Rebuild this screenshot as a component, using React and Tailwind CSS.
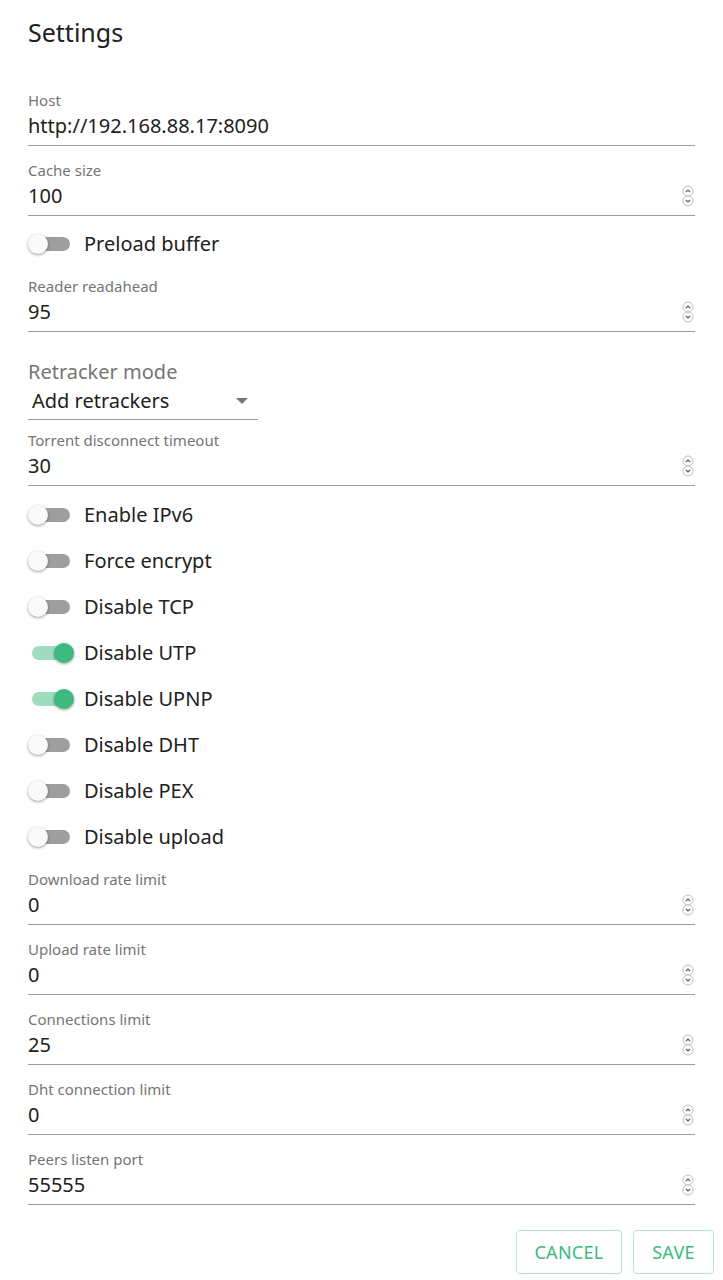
import React from "react";

const font = { fontFamily: '"Noto Sans", "Open Sans", sans-serif' };

function Spinner() {
    return (
        <svg width="12" height="22" viewBox="0 0 12 22" className="shrink-0">
            <circle cx="6" cy="6" r="5" fill="white" stroke="#bdbdbd" strokeWidth="1" />
            <path d="M3.8 7.2 L6 5 L8.2 7.2" fill="none" stroke="#555" strokeWidth="1.2" />
            <circle cx="6" cy="16" r="5" fill="white" stroke="#bdbdbd" strokeWidth="1" />
            <path d="M3.8 14.8 L6 17 L8.2 14.8" fill="none" stroke="#555" strokeWidth="1.2" />
        </svg>
    );
}

function TextField({ label, value, number }) {
    return (
        <div className="mr-[28px] pt-[2px]">
            <div className="text-[15px] leading-[20px] text-[#757575]">{label}</div>
            <div className="flex items-center justify-between h-[36px] pb-[4px] border-b border-[#9e9e9e]">
                <span className="text-[20px] text-[#212121] leading-[26px]">{value}</span>
                {number && <div className="mr-[1px]"><Spinner /></div>}
            </div>
        </div>
    );
}

function Toggle({ label, on }) {
    return (
        <div className="flex items-center h-[46px] -ml-[2px]">
            <div className="relative w-[50px] h-[24px] shrink-0 flex items-center">
                <div className={`ml-[6px] w-[38px] h-[14px] rounded-full ${on ? "bg-[#9edcbf]" : "bg-[#9e9e9e]"}`} />
                <div
                    className={`absolute top-[2px] w-[20px] h-[20px] rounded-full shadow-[0_1px_3px_rgba(0,0,0,0.4)] ${on ? "left-[28px] bg-[#3dba7f]" : "left-[2px] bg-[#fafafa]"}`}
                />
            </div>
            <span className="ml-[8px] text-[20px] text-[#212121]">{label}</span>
        </div>
    );
}

export default function App() {
    return (
        <div className="w-[723px] h-[1280px] bg-white pl-[28px] overflow-hidden" style={font}>
            <h1 className="text-[25px] text-[#212121] pt-[15px] leading-[34px] h-[88px]">Settings</h1>

            <TextField label="Host" value="http://192.168.88.17:8090" />
            <div className="h-[12px]" />
            <TextField label="Cache size" value="100" number />
            <div className="mt-[5px] mb-[7px]">
                <Toggle label="Preload buffer" on={false} />
            </div>
            <TextField label="Reader readahead" value="95" number />

            <div className="mt-[28px] w-[230px]">
                <div className="text-[20px] text-[#757575] leading-[24px]">Retracker mode</div>
                <div className="flex items-center justify-between h-[36px] pb-[2px] border-b border-[#9e9e9e] pl-[4px] pr-[10px]">
                    <span className="text-[20px] text-[#212121]">Add retrackers</span>
                    <svg width="12" height="6" viewBox="0 0 12 6"><path d="M0 0 L12 0 L6 6 Z" fill="#757575" /></svg>
                </div>
            </div>
            <div className="h-[8px]" />
            <TextField label="Torrent disconnect timeout" value="30" number />

            <div className="pt-[6px]">
                <Toggle label="Enable IPv6" />
                <Toggle label="Force encrypt" />
                <Toggle label="Disable TCP" />
                <Toggle label="Disable UTP" on />
                <Toggle label="Disable UPNP" on />
                <Toggle label="Disable DHT" />
                <Toggle label="Disable PEX" />
                <Toggle label="Disable upload" />
            </div>

            <div className="pt-[7px] flex flex-col gap-[12px]">
                <TextField label="Download rate limit" value="0" number />
                <TextField label="Upload rate limit" value="0" number />
                <TextField label="Connections limit" value="25" number />
                <TextField label="Dht connection limit" value="0" number />
                <TextField label="Peers listen port" value="55555" number />
            </div>

            <div className="flex justify-end gap-[11px] pr-[9px] mt-[25px]">
                <button className="w-[106px] h-[44px] rounded-[4px] border border-[#b7e4cf] text-[#3dba7f] text-[18px] tracking-[0.3px]">CANCEL</button>
                <button className="w-[81px] h-[44px] rounded-[4px] border border-[#b7e4cf] text-[#3dba7f] text-[18px] tracking-[0.3px]">SAVE</button>
            </div>
        </div>
    );
}
